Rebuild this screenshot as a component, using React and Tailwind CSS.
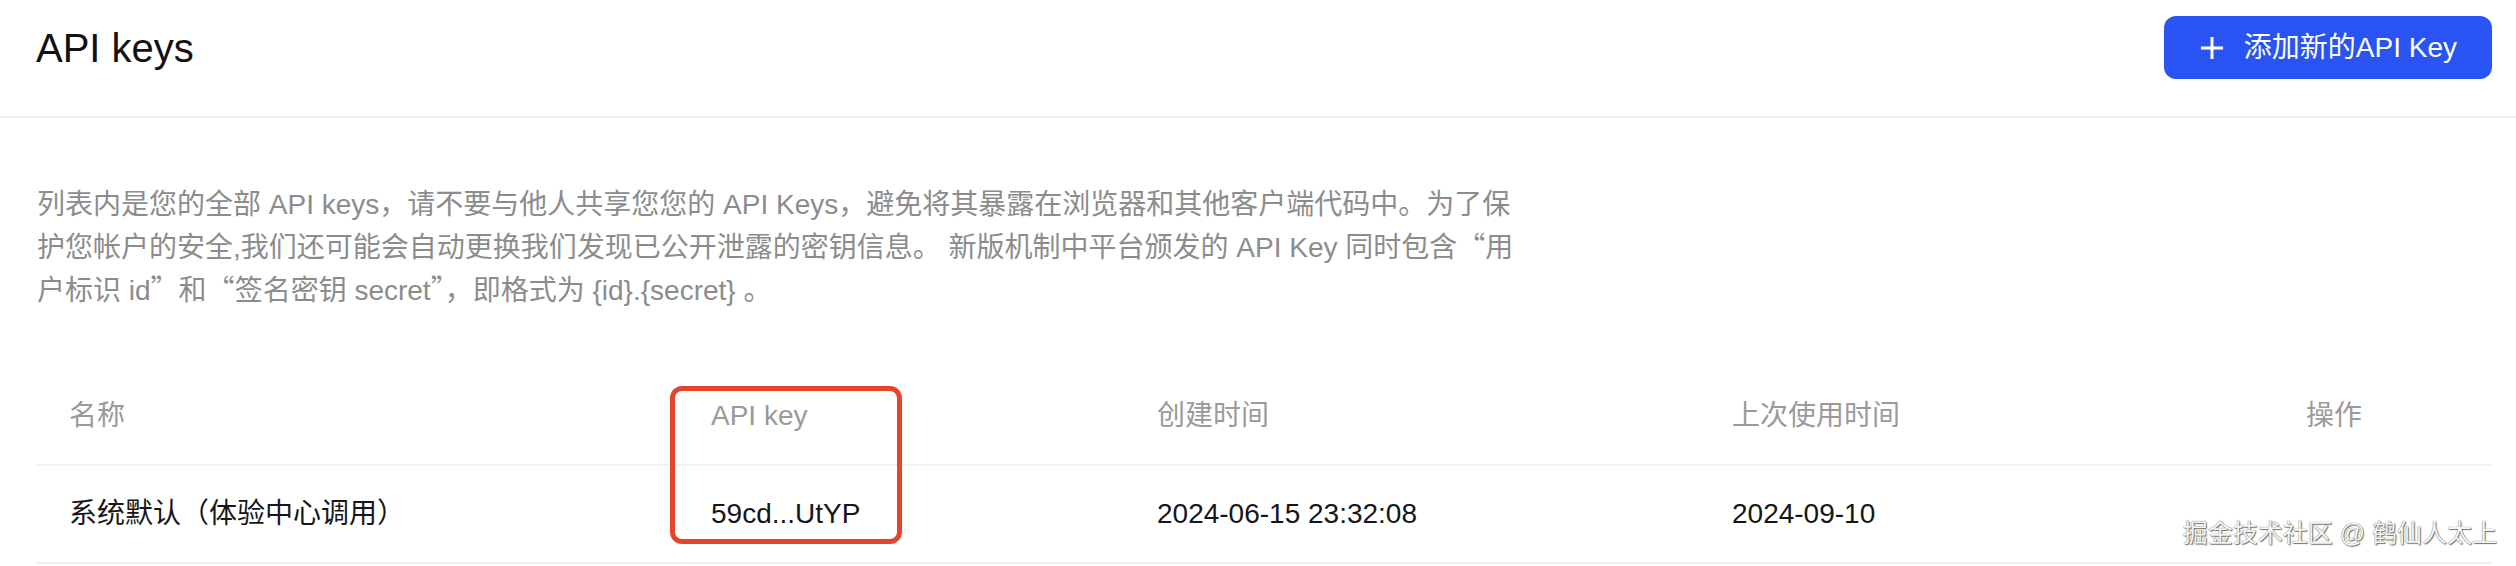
// API keys 管理页：标题栏 + 说明 + 列表
const FONT = "font-['Liberation_Sans','Noto_Sans_CJK_SC',sans-serif]";
const CJK = "font-['Noto_Sans_CJK_SC',sans-serif]";

const COLUMNS = ['名称', 'API key', '创建时间', '上次使用时间', '操作'];
const ROWS = [
  {
    name: '系统默认（体验中心调用）',
    key: '59cd...UtYP',
    created: '2024-06-15 23:32:08',
    lastUsed: '2024-09-10',
  },
];

function PlusIcon() {
  return (
    <svg width="24" height="24" viewBox="0 0 24 24" fill="none" stroke="currentColor" strokeWidth="3" strokeLinecap="butt">
      <path d="M12 1v22M1 12h22" />
    </svg>
  );
}

function Q({ children }) {
  return <span className={CJK}>{children}</span>;
}

export default function App() {
  return (
    <div className={`relative h-[566px] w-full overflow-hidden bg-white ${FONT}`}>
      <header className="flex items-center justify-between border-b-2 border-[#f0f0f0] pb-[37px] pl-9 pr-6 pt-4">
        <h1 className="text-[40px] leading-[48px] text-[#111]">API keys</h1>
        <button type="button" className="flex h-[63px] items-center gap-5 rounded-[12px] bg-[#2a53f4] pl-9 pr-[35px] text-[28px] text-white">
          <PlusIcon />
          <span>添加新的API Key</span>
        </button>
      </header>

      <p className="mt-[66px] whitespace-nowrap pl-[37px] text-[28px] leading-[41px] text-[#8c8c8c]">
        列表内是您的全部 API keys，请不要与他人共享您您的 API Keys，避免将其暴露在浏览器和其他客户端代码中。为了保
        <br />
        护您帐户的安全,我们还可能会自动更换我们发现已公开泄露的密钥信息。 新版机制中平台颁发的 API Key 同时包含<Q>“</Q>用
        <br />
        户标识 id<Q>”</Q>和<Q>“</Q>签名密钥 secret<Q>”</Q>，即格式为 {'{id}.{secret}'} 。
      </p>

      <div className="relative ml-9 mr-6 mt-[57px]">
        <div className="grid h-[98px] grid-cols-[642px_446px_575px_574px_1fr] items-center border-b-2 border-[#f2f2f2] text-[28px] text-[#9a9a9a]">
          {COLUMNS.map((col) => (
            <div key={col} className="pl-[33px]">{col}</div>
          ))}
        </div>
        {ROWS.map((row) => (
          <div key={row.key} className="grid h-[98px] grid-cols-[642px_446px_575px_574px_1fr] items-center border-b-2 border-[#ededed] text-[28px] text-[#161616]">
            <div className="pl-[33px]">{row.name}</div>
            <div className="pl-[33px]">{row.key}</div>
            <div className="pl-[33px]">{row.created}</div>
            <div className="pl-[33px]">{row.lastUsed}</div>
            <div className="pl-[33px]" />
          </div>
        ))}
        <div className="absolute left-[634px] top-[18px] h-[158px] w-[232px] rounded-[12px] border-[5px] border-[#e5442e]" />
      </div>

      <div className="absolute bottom-[18px] right-[19px] text-[25px] leading-[30px] text-[#f7f7f7] [text-shadow:0_0_1px_#444,1px_1px_1px_#777]">
        掘金技术社区 @ 鹤仙人太上
      </div>
    </div>
  );
}
